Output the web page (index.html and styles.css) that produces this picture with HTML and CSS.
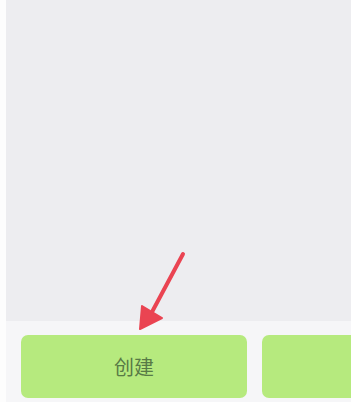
FILE: index.html
```html
<!DOCTYPE html>
<html lang="zh">
<head>
    <meta charset="UTF-8">
    <meta name="viewport" content="width=device-width, initial-scale=1.0">
    <title>创建</title>
    <link rel="stylesheet" href="styles.css">
</head>
<body>

<div class="screen">
    <div class="content"></div>
    <div class="toolbar">
        <button class="btn">创建</button>
        <button class="btn"></button>
    </div>

    <!-- red pointer drawn over the screenshot -->
    <svg class="pointer" width="60" height="90" viewBox="0 0 60 90">
        <path d="M47 4 L16 62" stroke="#ea4452" stroke-width="4" stroke-linecap="round" fill="none"/>
        <path d="M4 79 L6 56 L26 68 Z" fill="#ea4452" stroke="#ea4452" stroke-width="2" stroke-linejoin="round"/>
    </svg>
</div>

</body>
</html>
```

FILE: styles.css
```css
body {
    margin: 0;
    padding: 0;
    background-color: #ffffff;
    font-family: "Noto Sans CJK SC", "Noto Sans", sans-serif;
}
.screen {
    position: relative;
    width: 351px;
    height: 402px;
    padding-left: 6px;
    box-sizing: border-box;
    display: flex;
    flex-direction: column;
    overflow: hidden;
    background: #fdfdfd;
}
.content {
    flex: 1;
    background-color: #ededf0;
}
.toolbar {
    height: 81px;
    box-sizing: border-box;
    background-color: #f6f6f8;
    padding: 14px 0 0 15px;
    display: flex;
    gap: 15px;
}
.btn {
    flex: 0 0 226px;
    height: 63px;
    border: none;
    border-radius: 7px;
    background-color: #b6ea7e;
    color: #587a46;
    font-family: inherit;
    font-size: 20px;
    padding: 0;
}
.pointer {
    position: absolute;
    left: 136px;
    top: 250px;
}
```
